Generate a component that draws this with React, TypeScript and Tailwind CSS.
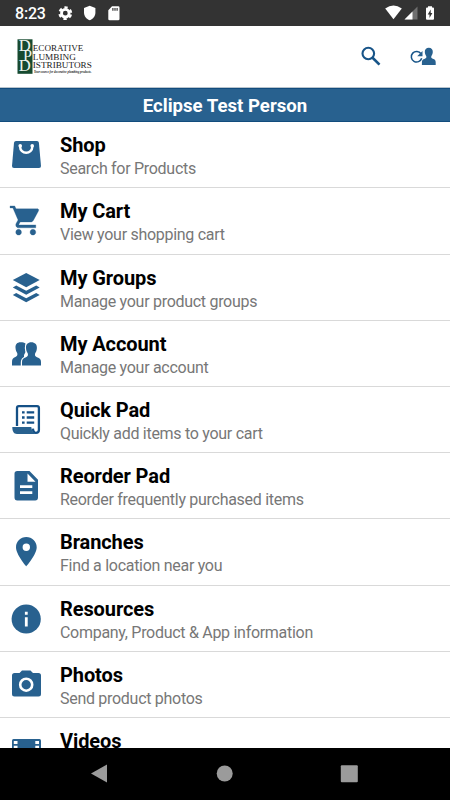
import React from 'react';

type MenuItem = {
  title: string;
  subtitle?: string;
  icon: React.ReactNode;
};

// Icons are drawn in the row's own 60x66 space
const MENU: MenuItem[] = [
  {
    title: 'Shop',
    subtitle: 'Search for Products',
    icon: (
      <>
        <path d="M16 19h21q1.700 0 1.900 1.700L41 44q.1 2-2 2H14q-2.100 0-2-2l2-23.300Q14.300 19 16 19z" />
        <path d="M20.200 24v1.200a6 5.600 0 0 0 12 0V24" fill="none" stroke="#fff" strokeWidth="2.500" />
        <circle cx="20.200" cy="23.700" r="1.800" fill="#fff" />
        <circle cx="32.200" cy="23.700" r="1.800" fill="#fff" />
      </>
    ),
  },
  {
    title: 'My Cart',
    subtitle: 'View your shopping cart',
    icon: (
      <path
        transform="translate(8.6 15) scale(1.43 1.46)"
        stroke="#28618f"
        strokeWidth="0.2"
        d="M7 18c-1.100 0-1.990.9-1.990 2S5.900 22 7 22s2-.9 2-2-.9-2-2-2zM1 2v1.400h2l3.600 8.190-1.350 2.450c-.16.28-.25.61-.25.96 0 1.100.9 2 2 2h12v-2H7.420c-.14 0-.25-.11-.25-.25l.03-.12.9-1.630h7.450c.75 0 1.410-.41 1.750-1.030l3.580-6.490A1.003 1.003 0 0 0 20.500 4H5.210l-.94-2H1zm16 16c-1.100 0-1.990.9-1.990 2s.89 2 1.990 2 2-.9 2-2-.9-2-2-2z"
      />
    ),
  },
  {
    title: 'My Groups',
    subtitle: 'Manage your product groups',
    icon: (
      <>
        <path d="M26.200 18 39.700 25 26.200 32.300 12.800 25z" />
        <path d="M12.800 32.400l3.400-1.900 10 5.300 10-5.300 3.500 1.900-13.500 7.300z" />
        <path d="M12.800 39.900l3.400-1.900 10 5.300 10-5.300 3.500 1.900-13.500 7.300z" />
      </>
    ),
  },
  {
    title: 'My Account',
    subtitle: 'Manage your account',
    icon: (
      <>
        <path d="M20.500 21.300c-3.400 0-5.200 2.200-5 5.500.1 2.800 1 4 1.700 5.300.6 2-.1 3.200-1.800 4-2.400 1-3.400 2-3.400 5V44.500h12V34l1.500-3V22.500c-1.100-.8-2.700-1.200-5-1.200z" />
        <path
          d="M31.300 21.300c-3.500 0-5.500 2.200-5.300 5.700.1 2.700 1 4 1.700 5.300.7 2 0 3.200-1.700 4-2.800 1-4 1.900-4 4.800v3.400h19v-3.400c0-2.900-1.200-3.800-4-4.800-1.800-.8-2.500-2-1.800-4 .8-1.300 1.600-2.600 1.700-5.300.2-3.500-2.100-5.700-5.600-5.700z"
          stroke="#fff"
          strokeWidth="2.400"
          paintOrder="stroke"
        />
      </>
    ),
  },
  {
    title: 'Quick Pad',
    subtitle: 'Quickly add items to your cart',
    icon: (
      <>
        <path
          d="M17 39V21q0-1.800 1.800-1.800h18.300q1.800 0 1.800 1.800v22q0 2.800-3 2.800-2.700 0-3-4.200"
          fill="none"
          stroke="#145086"
          strokeWidth="2.300"
        />
        <path d="M12.300 40h19c.4 3.400 1.400 5.300 4.200 6.900H17c-3.300 0-4.700-2.500-4.700-6.900z" />
        <path d="M22 24.200h2.600v2.400H22zm4.700 0h7.500v2.400h-7.500zM22 29.300h2.600v2.400H22zm4.700 0h7.500v2.400h-7.500zM22 34.400h2.600v2.400H22zm4.700 0h7.500v2.400h-7.500z" fill="#145086" />
      </>
    ),
  },
  {
    title: 'Reorder Pad',
    subtitle: 'Reorder frequently purchased items',
    icon: (
      <path
        fillRule="evenodd"
        d="M17.200 18H29.500L38 26.700V44.600Q38 47.500 35.200 47.500H17.300Q14.500 47.500 14.500 44.600V20.800Q14.500 18 17.200 18zM27.500 20.500V28.700H35.500zM20 32.300V35H32.300V32.300zM20 38.300V41H32.300V38.300z"
      />
    ),
  },
  {
    title: 'Branches',
    subtitle: 'Find a location near you',
    icon: (
      <path
        fillRule="evenodd"
        d="M26.300 18C20.500 18 16 22.500 16 28.200 16 35.600 26.300 47.300 26.300 47.300S36.700 35.600 36.700 28.200C36.700 22.500 32 18 26.300 18zM26.300 31.900a3.700 3.700 0 1 1 0-7.400 3.700 3.700 0 0 1 0 7.400z"
      />
    ),
  },
  {
    title: 'Resources',
    subtitle: 'Company, Product & App information',
    icon: (
      <>
        <circle cx="26.200" cy="33" r="14.600" />
        <path d="M24.900 25.800h2.800v2.900h-2.800zM24.900 31.300h2.800v9.200h-2.800z" fill="#fff" />
      </>
    ),
  },
  {
    title: 'Photos',
    subtitle: 'Send product photos',
    icon: (
      <>
        <path d="M22 18.400h8.500l2.500 2.700h5.500q2.500 0 2.500 2.500v18.300q0 2.500-2.500 2.500h-24q-2.500 0-2.500-2.500V23.600q0-2.500 2.500-2.500h5z" />
        <circle cx="26.200" cy="32.700" r="6" fill="none" stroke="#fff" strokeWidth="2.600" />
      </>
    ),
  },
  {
    title: 'Videos',
    icon: (
      <>
        <rect x="12" y="21" width="29" height="24" rx="1.500" />
        <path
          d="M13.800 23h3.700v3h-3.700zm0 4.800h3.700v3h-3.700zm0 4.800h3.700v3h-3.700zM35.300 23H39v3h-3.700zm0 4.800H39v3h-3.700zm0 4.800H39v3h-3.700z"
          fill="#fff"
        />
      </>
    ),
  },
];

const StatusBar = () => (
  <div className="flex h-[26px] shrink-0 items-center justify-between bg-[#333333] text-white">
    <div className="flex items-center">
      <span className="w-[56px] pl-[15px] pt-px text-[16px] leading-[28px] font-medium tracking-[-0.2px]">8:23</span>
      <svg className="h-[26px] w-[70px]" viewBox="56 0 70 26" fill="#fff">
        <circle cx="65.300" cy="13.200" r="3.800" fill="none" stroke="#fff" strokeWidth="2.800" />
        <circle cx="65.300" cy="13.200" r="5.800" fill="none" stroke="#fff" strokeWidth="2.200" strokeDasharray="3.300 2.774" strokeDashoffset="-1.400" />
        <path d="M89.700 5.800l5.700 2.100v4.600c0 3.500-2.300 6.500-5.700 7.800-3.400-1.300-5.700-4.300-5.700-7.800V7.900z" />
        <path
          fillRule="evenodd"
          d="M112 6.300h6.200q1.300 0 1.300 1.300v11.300q0 1.300-1.300 1.300h-8.600q-1.300 0-1.300-1.300V10.200zM112.300 8v2.700h1.200V8zm2.100 0v2.700h1.200V8zm2.100 0v2.700h1.200V8z"
        />
      </svg>
    </div>
    <svg className="h-[26px] w-[70px]" viewBox="380 0 70 26" fill="#fff">
      <path d="M385.200 8.500q8.300-5.800 16.600 0L393.500 19.300z" />
      <path d="M417.500 6.500v13h-13z" fill="#6f6f6f" />
      <path d="M412.500 11.500v8h-8z" />
      <path
        fillRule="evenodd"
        d="M428 6.200h4v1.400h1q1 0 1 1v10.200q0 1-1 1h-6q-1 0-1-1V8.600q0-1 1-1h1zM430.700 9.500L427.700 14.400H429.500V18L432.400 13H430.700z"
      />
    </svg>
  </div>
);

const Logo = () => (
  <svg className="h-[61px] w-[110px]" viewBox="0 26 110 61" fontFamily="'Liberation Serif', serif">
    <rect x="17.500" y="39.300" width="15" height="34.500" fill="#164a30" />
    <g fill="#edf4ef" fontSize="16">
      <text x="18.800" y="50.800" textLength="12" lengthAdjust="spacingAndGlyphs">D</text>
      <text x="23" y="61" textLength="9" lengthAdjust="spacingAndGlyphs">P</text>
      <text x="18.800" y="70.800" textLength="12" lengthAdjust="spacingAndGlyphs">D</text>
    </g>
    <g fill="#222" fontSize="9.200">
      <text x="32.800" y="51" textLength="50.500" lengthAdjust="spacingAndGlyphs">ECORATIVE</text>
      <text x="32.800" y="59.700" textLength="43" lengthAdjust="spacingAndGlyphs">LUMBING</text>
      <text x="32.800" y="68.200" textLength="59" lengthAdjust="spacingAndGlyphs">ISTRIBUTORS</text>
      <text x="34" y="73" fontSize="4" fontStyle="italic" fontWeight="bold" textLength="57.500" lengthAdjust="spacingAndGlyphs">Your source for decorative plumbing products.</text>
    </g>
  </svg>
);

const Header = () => (
  <header className="flex h-[62px] shrink-0 items-center justify-between border-b border-[#b8c4cd] bg-white">
    <Logo />
    <svg className="h-[61px] w-[100px]" viewBox="350 26 100 61" fill="#28618f">
      <circle cx="368.300" cy="53.500" r="5.800" fill="none" stroke="#175488" strokeWidth="2.100" />
      <path d="M372.300 57.500l7.200 7.200" fill="none" stroke="#175488" strokeWidth="2.600" />
      <path d="M421 53.700a5.300 5.300 0 1 0 .7 4.600" fill="none" stroke="#175488" strokeWidth="1.500" />
      <path d="M422.500 51v5.300h-5.300z" />
      <path d="M428.800 47.700c-2.600 0-4.100 1.700-4 4.200.1 1.900.7 3 1.400 4 .5 1.500 0 2.300-1.400 2.800-2.100.8-2.900 1.400-2.900 3.700V65h13.800v-2.600c0-2.300-.8-2.900-2.900-3.700-1.400-.5-1.900-1.300-1.400-2.800.7-1 1.300-2.100 1.400-4 .1-2.500-1.400-4.200-4-4.200z" />
    </svg>
  </header>
);

const MenuRow = ({ item }: { item: MenuItem }) => (
  <li className="flex h-[66.2px] shrink-0 border-b border-[#d9d9d9]">
    <svg className="h-[66px] w-[60px] shrink-0" viewBox="0 0 60 66" fill="#28618f">
      {item.icon}
    </svg>
    <div className="pt-[11px]">
      <p className="text-[20px] leading-[24px] font-bold tracking-[-0.1px] text-black">{item.title}</p>
      {item.subtitle && (
        <p className="text-[16px] leading-[24px] tracking-[-0.29px] text-[#777777]">{item.subtitle}</p>
      )}
    </div>
  </li>
);

const NavBar = () => (
  <nav className="flex h-[52px] shrink-0 bg-black">
    <svg className="h-[52px] w-full" viewBox="0 748 450 52" fill="#9b9b9b">
      <path d="M91 773.500l16-9v18z" />
      <circle cx="224.700" cy="773.500" r="8" />
      <rect x="340.800" y="765.200" width="17" height="17" rx="1" />
    </svg>
  </nav>
);

export default function App() {
  return (
    <div className="flex h-[800px] w-[450px] flex-col overflow-hidden bg-white font-[Roboto,sans-serif]">
      <StatusBar />
      <Header />
      <div className="h-[34px] shrink-0 border-y border-[#124c7d] bg-[#28618f] text-center text-[18.6px] leading-[35px] font-bold text-white">
        Eclipse Test Person
      </div>
      <ul className="flex min-h-0 flex-1 flex-col overflow-hidden pt-[0.3px]">
        {MENU.map((item) => (
          <MenuRow key={item.title} item={item} />
        ))}
      </ul>
      <NavBar />
    </div>
  );
}
